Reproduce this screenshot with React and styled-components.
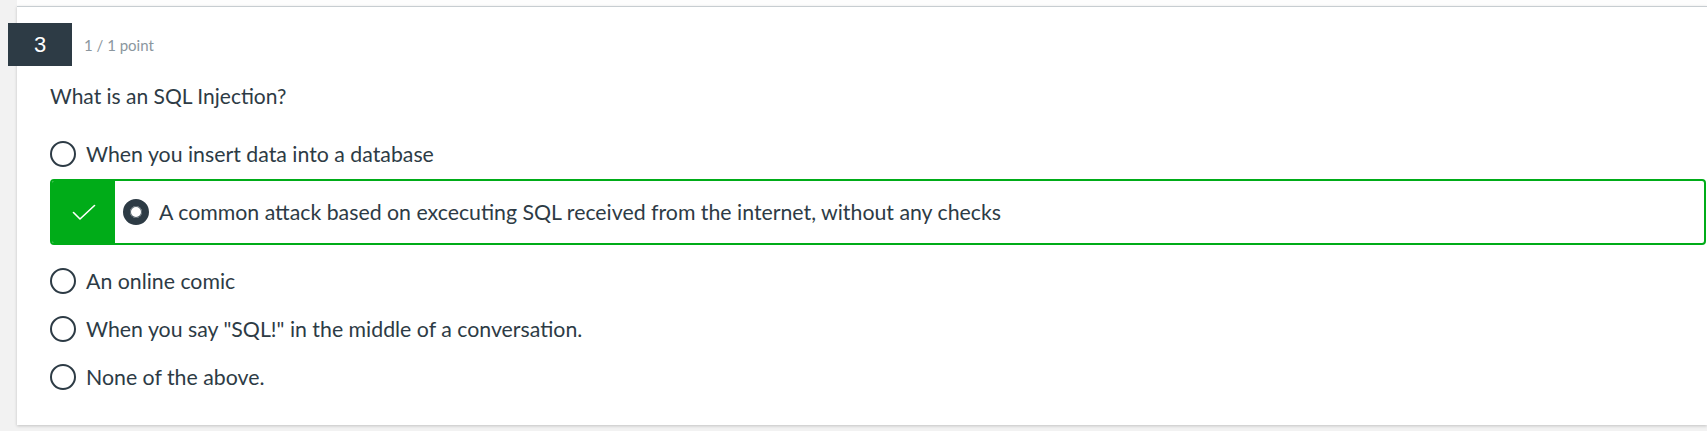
import React from "react";
import styled, { createGlobalStyle } from "styled-components";

const GlobalStyle = createGlobalStyle`
  html, body { margin: 0; padding: 0; }
  body {
    background: #f2f2f2;
    font-family: Lato, "Open Sans", "Liberation Sans", sans-serif;
    color: #2d3b45;
    overflow: hidden;
  }
`;

const Page = styled.div`
  padding-left: 17px;
  padding-bottom: 20px;
`;

const PrevCardTail = styled.div`
  height: 6px;
  background: #fdfdfd;
`;

const Card = styled.section`
  background: #fff;
  border-top: 1px solid #c7cdd1;
  box-shadow: 0 1px 3px rgba(0, 0, 0, 0.2);
  padding: 16px 1px 24px 33px;
`;

const Header = styled.div`
  display: flex;
  align-items: center;
  gap: 12px;
`;

const NumberBadge = styled.div`
  margin-left: -42px;
  width: 64px;
  height: 43px;
  background: #2d3b45;
  color: #fff;
  font-family: "Liberation Sans", Arial, sans-serif;
  font-size: 22px;
  display: flex;
  align-items: center;
  justify-content: center;
`;

const Points = styled.span`
  font-size: 15px;
  color: #8b969e;
`;

const Question = styled.div`
  margin-top: 17px;
  font-size: 21px;
  line-height: 25px;
`;

const Options = styled.div`
  margin-top: 22px;
  display: flex;
  flex-direction: column;
`;

const Option = styled.label`
  display: flex;
  align-items: center;
  height: 48px;
  font-size: 21.3px;
  line-height: 25px;
`;

const SelectedOption = styled.label`
  display: flex;
  align-items: center;
  box-sizing: border-box;
  height: 66px;
  margin: 1px 0 12px;
  border: 2px solid #00ac18;
  border-radius: 4px;
  overflow: hidden;
  font-size: 21.3px;
  line-height: 25px;
`;

const CorrectMark = styled.div`
  align-self: stretch;
  width: 63px;
  background: #00ac18;
  display: flex;
  align-items: center;
  justify-content: center;
  margin-right: 8px;
`;

const Radio = styled.span`
  box-sizing: border-box;
  flex: none;
  width: 26px;
  height: 26px;
  border-radius: 50%;
  border: ${(p) => (p.$checked ? "7px" : "2px")} solid #2d3b45;
  background: #fff;
  box-shadow: ${(p) => (p.$checked ? "inset 0 0 0 1px #55626b" : "none")};
  margin-right: 10px;
`;

const OptionText = styled.span`
  white-space: nowrap;
`;

const CheckIcon = () => (
  <svg width="24" height="16" viewBox="0 0 24 16" fill="none">
    <polyline
      points="1.5,8.5 8,15 22.5,1.5"
      stroke="#fff"
      strokeWidth="1.6"
      strokeLinecap="round"
      strokeLinejoin="round"
    />
  </svg>
);

const answers = [
  { text: "When you insert data into a database" },
  {
    text: "A common attack based on excecuting SQL received from the internet, without any checks",
    selected: true,
  },
  { text: "An online comic" },
  { text: 'When you say "SQL!" in the middle of a conversation.' },
  { text: "None of the above." },
];

export default function App() {
  return (
    <>
      <GlobalStyle />
      <Page>
        <PrevCardTail />
        <Card>
          <Header>
            <NumberBadge>3</NumberBadge>
            <Points>1 / 1 point</Points>
          </Header>
          <Question>What is an SQL Injection?</Question>
          <Options>
            {answers.map((a) =>
              a.selected ? (
                <SelectedOption key={a.text}>
                  <CorrectMark>
                    <CheckIcon />
                  </CorrectMark>
                  <Radio $checked />
                  <OptionText>{a.text}</OptionText>
                </SelectedOption>
              ) : (
                <Option key={a.text}>
                  <Radio />
                  <OptionText>{a.text}</OptionText>
                </Option>
              )
            )}
          </Options>
        </Card>
      </Page>
    </>
  );
}
